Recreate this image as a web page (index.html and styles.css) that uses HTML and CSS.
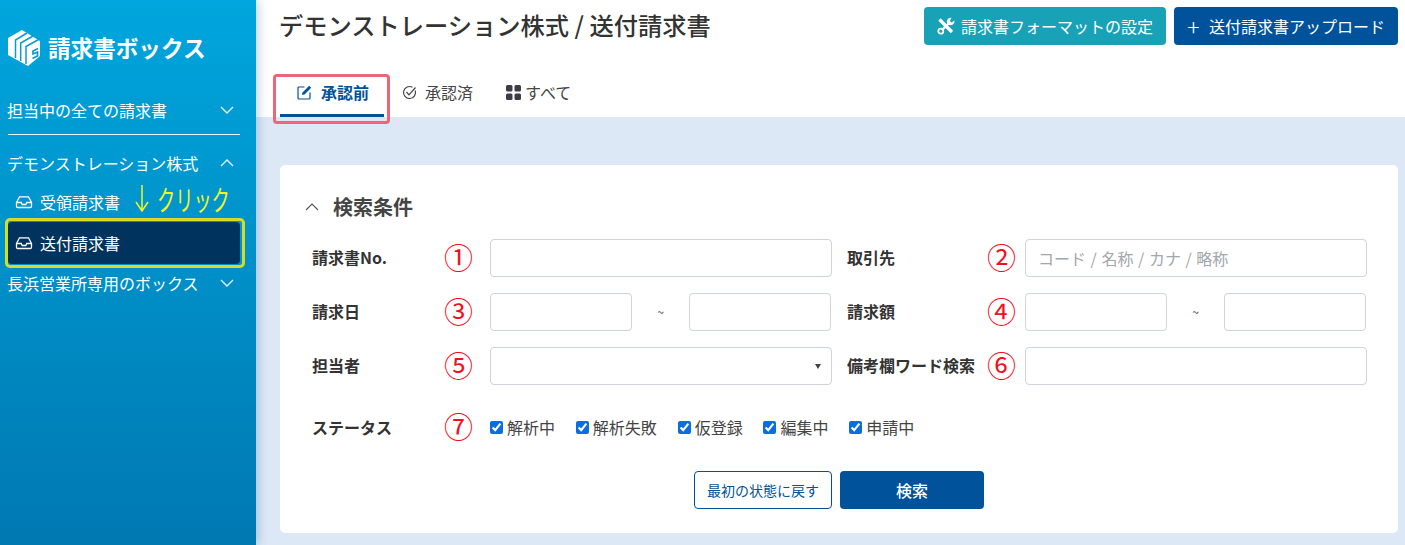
FILE: index.html
```html
<!DOCTYPE html>
<html lang="ja">
<head>
<meta charset="utf-8">
<title>送付請求書</title>
<link rel="stylesheet" href="styles.css">
</head>
<body>
<div class="app">
  <aside class="sidebar">
    <div class="logo">
      <svg class="logo-mark" viewBox="0 0 32 36" width="32" height="36">
        <path fill="#fff" d="M14 0 32 11V26L20 36 0 25V8Z"/>
        <path class="logo-line" d="M7.500 28V10L19 3"/>
        <path class="logo-line" d="M12.700 31V13L25 6"/>
        <path class="logo-line" d="M18 34V16.500L31.500 9"/>
        <path class="logo-line thin" d="M30 18.500 25 21V24L29.500 22V26L24.500 28.500"/>
      </svg>
      <span class="logo-text">請求書ボックス</span>
    </div>
    <nav class="nav">
      <div class="nav-item"><span>担当中の全ての請求書</span><svg class="chev" viewBox="0 0 16 10" width="16" height="10"><path d="M2 2 8 8 14 2"/></svg></div>
      <hr class="nav-rule">
      <div class="nav-item nav-open"><span>デモンストレーション株式</span><svg class="chev" viewBox="0 0 16 10" width="16" height="10"><path d="M2 8 8 2 14 8"/></svg></div>
      <div class="nav-sub">
        <svg class="inbox" viewBox="0 0 18 14" width="18" height="14"><path d="M1.500 7.500 4.500 1.800H13.500L16.500 7.500V11.200A1.300 1.300 0 0 1 15.200 12.500H2.800A1.300 1.300 0 0 1 1.500 11.200ZM1.500 7.500H6.200L7.200 9.500H10.800L11.800 7.500H16.500"/></svg>
        <span>受領請求書</span>
        <span class="click-note"><svg class="click-arrow" viewBox="0 0 14 27" width="14" height="27"><path d="M7 0V26M1 17 7 26 13 17"/></svg><span class="click-text">クリック</span></span>
      </div>
      <div class="nav-sub nav-active">
        <svg class="inbox" viewBox="0 0 18 14" width="18" height="14"><path d="M1.500 7.500 4.500 1.800H13.500L16.500 7.500V11.200A1.300 1.300 0 0 1 15.200 12.500H2.800A1.300 1.300 0 0 1 1.500 11.200ZM1.500 7.500H6.200L7.200 9.500H10.800L11.800 7.500H16.500"/></svg>
        <span>送付請求書</span>
      </div>
      <div class="nav-item nav-last"><span>長浜営業所専用のボックス</span><svg class="chev" viewBox="0 0 16 10" width="16" height="10"><path d="M2 2 8 8 14 2"/></svg></div>
    </nav>
  </aside>

  <main class="main">
    <header class="header">
      <div class="topbar">
        <h1 class="page-title">デモンストレーション株式 / 送付請求書</h1>
        <div class="actions">
          <button class="btn btn-teal" type="button">
            <svg class="tools" viewBox="0 0 18 18" width="18" height="18"><path class="tool-thick" d="M2.500 2.500 15 15"/><path class="tool-thin" d="M12.500 5.500 5 13"/><circle class="tool-ring" cx="3.800" cy="14.200" r="2.500"/><path class="tool-head" d="M14.500 .8A3.800 3.800 0 1 0 17.300 3.600L14.800 5.600 12.800 4Z"/></svg>
            <span>請求書フォーマットの設定</span>
          </button>
          <button class="btn btn-navy" type="button"><span class="plus">+</span><span>送付請求書アップロード</span></button>
        </div>
      </div>
      <div class="tabs">
        <a class="tab tab-active">
          <svg class="tab-icon" viewBox="0 0 15 15" width="15" height="15"><path class="ink" d="M7.500 2H2A1 1 0 0 0 1 3V13A1 1 0 0 0 2 14H12A1 1 0 0 0 13 13V7.500"/><path class="solid" d="M12.200.8 14.200 2.800 7.500 9.500 5 10 5.500 7.500Z"/></svg>
          <span>承認前</span>
        </a>
        <a class="tab tab-done">
          <svg class="tab-icon" viewBox="0 0 15 15" width="15" height="15"><path class="ink" d="M13.200 5.500A6 6 0 1 1 10.500 2.300"/><path class="ink" d="M4.500 7 7 9.800 13.500 2.500"/></svg>
          <span>承認済</span>
        </a>
        <a class="tab tab-all">
          <svg class="tab-icon grid-icon" viewBox="0 0 15 15" width="15" height="15"><rect x="0" y="0" width="6.500" height="6.500" rx="1.500"/><rect x="8.500" y="0" width="6.500" height="6.500" rx="1.500"/><rect x="0" y="8.500" width="6.500" height="6.500" rx="1.500"/><rect x="8.500" y="8.500" width="6.500" height="6.500" rx="1.500"/></svg>
          <span>すべて</span>
        </a>
      </div>
    </header>

    <section class="content">
      <div class="card">
        <div class="card-title">
          <svg class="card-chev" viewBox="0 0 16 10" width="16" height="10"><path d="M2 8 8 2 14 8"/></svg>
          <h2>検索条件</h2>
        </div>
        <form class="form">
          <div class="label-cell"><label>請求書No.</label><span class="mark">①</span></div>
          <div class="field"><input class="input" type="text"></div>
          <div class="label-cell label-right"><label>取引先</label><span class="mark">②</span></div>
          <div class="field"><input class="input" type="text" placeholder="コード / 名称 / カナ / 略称"></div>

          <div class="label-cell"><label>請求日</label><span class="mark">③</span></div>
          <div class="field range"><input class="input" type="text"><span class="tilde">~</span><input class="input" type="text"></div>
          <div class="label-cell label-right"><label>請求額</label><span class="mark">④</span></div>
          <div class="field range"><input class="input" type="text"><span class="tilde">~</span><input class="input" type="text"></div>

          <div class="label-cell"><label>担当者</label><span class="mark">⑤</span></div>
          <div class="field select"><input class="input" type="text"><span class="caret"></span></div>
          <div class="label-cell label-right"><label>備考欄ワード検索</label><span class="mark">⑥</span></div>
          <div class="field"><input class="input" type="text"></div>

          <div class="label-cell status-label"><label>ステータス</label><span class="mark">⑦</span></div>
          <div class="checks">
            <label class="check"><input type="checkbox" checked>解析中</label>
            <label class="check"><input type="checkbox" checked>解析失敗</label>
            <label class="check"><input type="checkbox" checked>仮登録</label>
            <label class="check"><input type="checkbox" checked>編集中</label>
            <label class="check"><input type="checkbox" checked>申請中</label>
          </div>
        </form>
        <div class="form-actions">
          <button class="btn-reset" type="button">最初の状態に戻す</button>
          <button class="btn-search" type="button">検索</button>
        </div>
      </div>
    </section>
  </main>
</div>
</body>
</html>
```

FILE: styles.css
```css
* { box-sizing: border-box; }
html, body { margin: 0; height: 100%; }
body {
  font-family: "Noto Sans CJK JP", "Noto Sans", sans-serif;
  color: #333;
  font-size: 16px;
  overflow: hidden;
}
.app { display: flex; height: 545px; width: 1405px; }

/* sidebar */
.sidebar {
  width: 256px;
  flex: none;
  background: linear-gradient(180deg, #00a6dd 0%, #0078b2 100%);
  color: #fff;
  padding: 29px 16px 0 8px;
  box-shadow: 2px 0 10px rgba(0, 90, 170, .28);
  position: relative;
  z-index: 2;
}
.logo { display: flex; align-items: center; gap: 8px; height: 38px; }
.logo-line { fill: none; stroke: #0a9ad3; stroke-width: 1.500; }
.logo-line.thin { stroke-width: 1.700; }
.logo-text { font-size: 22.600px; font-weight: 700; line-height: 1; }
.nav { margin-top: 23px; }
.nav-item {
  height: 40px;
  display: flex;
  align-items: center;
  justify-content: space-between;
  padding-right: 5px;
  line-height: 1;
}
.nav-item span { margin-left: -1px; }
.chev { fill: none; stroke: #fff; stroke-width: 1.400; opacity: .9; }
.nav-rule { border: 0; border-top: 1px solid #fff; margin: 4px 0 8px; opacity: .9; }
.nav-sub {
  height: 39px;
  display: flex;
  align-items: center;
  gap: 7px;
  padding: 0 0 1px 7px;
  position: relative;
  line-height: 1;
}
.inbox { fill: none; stroke: #fff; stroke-width: 1.300; flex: none; }
.click-note { position: absolute; left: 127px; top: 2px; display: flex; align-items: flex-start; }
.click-arrow { fill: none; stroke: #f5f523; stroke-width: 1.500; flex: none; }
.click-text {
  color: #f5f523;
  font-size: 28px;
  line-height: 28px;
  margin-left: 8px;
  transform: scaleX(.65);
  transform-origin: left center;
  white-space: nowrap;
}
.nav-active {
  height: 42px;
  padding-bottom: 0;
  background: #00345f;
  border-radius: 4px;
}
.nav-active::after {
  content: "";
  position: absolute;
  inset: -4px -5px -4px -3px;
  border: 3px solid #d3dc26;
  border-radius: 5px;
  pointer-events: none;
}
.nav-last { height: 38px; }

/* main */
.main { flex: 1; display: flex; flex-direction: column; min-width: 0; background: #dce8f5; }
.header { background: #fff; height: 117px; padding: 7px 7px 0 24px; }
.topbar { display: flex; justify-content: space-between; align-items: flex-start; height: 61px; }
.page-title { margin: 0 0 0 -1px; font-size: 24.250px; font-weight: 500; line-height: 36px; color: #333; white-space: nowrap; }
.actions { display: flex; gap: 8px; }
.btn {
  height: 38px;
  border: 0;
  border-radius: 4px;
  color: #fff;
  font: inherit;
  font-size: 16px;
  display: flex;
  align-items: center;
  padding: 0;
  line-height: 1;
  white-space: nowrap;
}
.btn-teal { width: 242px; background: #18a2b8; padding-left: 13px; gap: 6px; }
.tool-thick { stroke: #fff; stroke-width: 3.200; fill: none; }
.tool-thin { stroke: #fff; stroke-width: 2.400; fill: none; }
.tool-ring { stroke: #fff; stroke-width: 1.700; fill: none; }
.tool-head { fill: #fff; }
.btn-navy { width: 224px; background: #00539a; padding-left: 13px; gap: 9px; }
.plus { font-size: 23px; font-weight: 300; width: 13px; text-align: center; line-height: 1; }

.tabs { display: flex; }
.tab {
  height: 49px;
  width: 104px;
  display: flex;
  align-items: center;
  gap: 9px;
  padding: 2px 0 0 17px;
  border-bottom: 3px solid transparent;
  font-size: 16px;
  line-height: 1;
  position: relative;
  color: #444;
}
.tab-done { margin-left: 1px; gap: 8px; }
.tab-all { gap: 4px; }
.tab-active { border-bottom-color: #00539a; color: #00539a; font-weight: 700; }
.tab-active::after {
  content: "";
  position: absolute;
  left: -7px; right: -6px; top: 6px; bottom: -10px;
  border: 3px solid #ee6478;
  border-radius: 4px;
  pointer-events: none;
}
.tab-icon .ink { fill: none; stroke: currentColor; stroke-width: 1.200; }
.tab-icon .solid { fill: currentColor; }
.grid-icon { fill: #3c3c46; }

/* content */
.content { padding: 48px 7px 0 24px; }
.card { background: #fff; border-radius: 5px; height: 368px; padding: 26px 0 0 32px; }
.card-title { display: flex; align-items: center; height: 32px; margin-bottom: 16px; margin-left: -8px; gap: 13px; }
.card-chev { fill: none; stroke: #555; stroke-width: 1.100; }
.card-title h2 { margin: -1px 0 0; font-size: 20px; font-weight: 700; color: #444; line-height: 1; }

.form {
  display: grid;
  grid-template-columns: 178px 342px 193px 342px;
  grid-template-rows: 38px 38px 38px 45px;
  row-gap: 16px;
}
.label-cell { display: flex; align-items: center; justify-content: space-between; padding-right: 17px; }
.label-right { padding-left: 15px; padding-right: 9px; }
.label-cell label { font-size: 16px; font-weight: 700; color: #333; white-space: nowrap; line-height: 1; margin-top: -3px; }
.status-label label { margin-top: -1px; }
.mark { color: #f0101e; font-size: 29px; line-height: 1; font-weight: 400; margin-top: -4px; }
.field { display: flex; align-items: center; position: relative; }
.input {
  width: 100%;
  height: 38px;
  border: 1px solid #ced4da;
  border-radius: 4px;
  background: #fff;
  font: inherit;
  word-spacing: 1px;
  padding: 0 12px;
  color: #333;
}
.input::placeholder { color: #a2a7ab; }
.range .input { width: 142px; flex: none; }
.range { justify-content: space-between; padding-right: 1px; }
.tilde { font-size: 12px; width: 57px; text-align: center; color: #444; line-height: 1; }
.caret {
  position: absolute;
  right: 11px;
  top: 17px;
  border-left: 3.500px solid transparent;
  border-right: 3.500px solid transparent;
  border-top: 5px solid #444;
}
.status-label { height: 38px; align-self: end; }
.checks { grid-column: 2 / 5; align-self: end; display: flex; align-items: center; gap: 20.800px; height: 38px; }
.check { display: flex; align-items: center; gap: 4px; font-size: 16px; color: #444; line-height: 1; white-space: nowrap; }
.check input { width: 13px; height: 13px; margin: 0; accent-color: #0b6ee0; flex: none; }
.form-actions { display: flex; gap: 8px; margin: 25px 0 0 382px; }
.btn-reset {
  width: 138px;
  height: 38px;
  border: 1px solid #00539a;
  border-radius: 4px;
  background: #fff;
  color: #00539a;
  font: inherit;
  font-size: 14px;
  padding: 0;
  line-height: 1;
}
.btn-search {
  width: 144px;
  height: 38px;
  border: 0;
  border-radius: 4px;
  background: #00539a;
  color: #fff;
  font: inherit;
  font-size: 16px;
  font-weight: 500;
  padding: 0;
  line-height: 1;
}
```
